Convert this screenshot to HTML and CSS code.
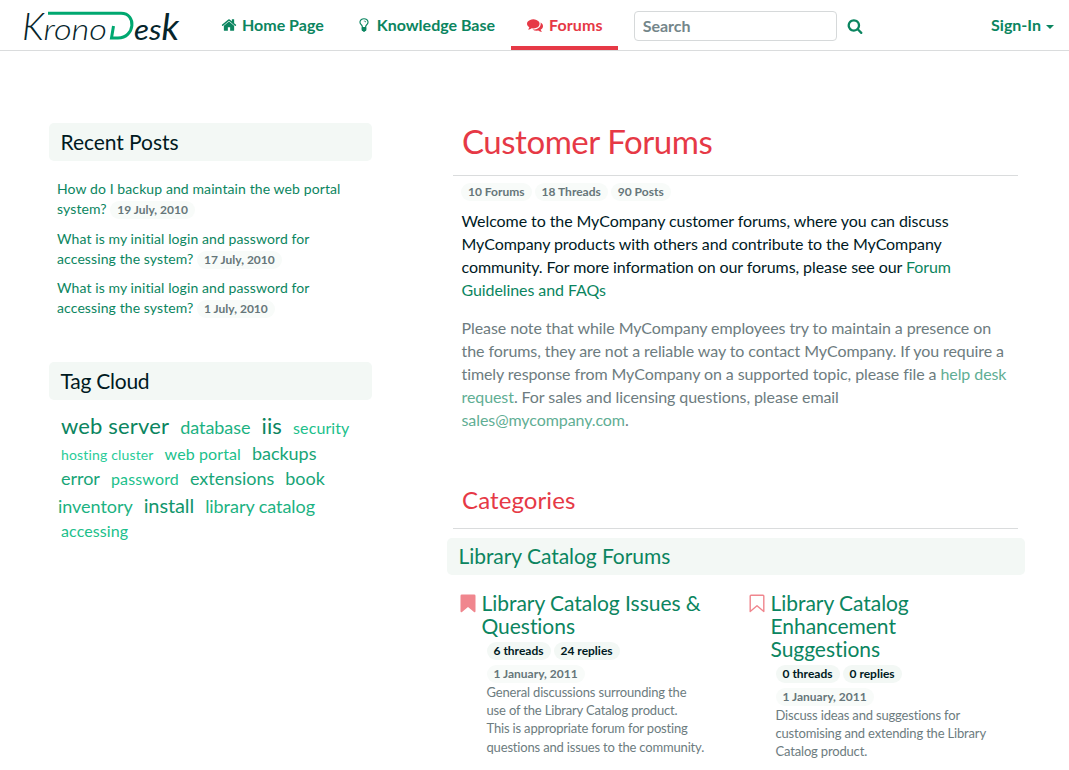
FILE: index.html
```html
<!DOCTYPE html>
<html lang="en">
<head>
<meta charset="utf-8">
<title>Customer Forums</title>
<link rel="stylesheet" href="styles.css">
</head>
<body>
<header class="navbar">
  <a class="brand">
    <svg width="170" height="44" viewBox="0 0 170 44">
      <text class="logo-light" y="37.500"><tspan class="cap" x="6">K</tspan><tspan class="low" x="27.500" textLength="63.500" lengthAdjust="spacingAndGlyphs">rono</tspan></text>
      <path d="M32 11.200H105C121 11.200 119 36 102 36H95.500L97.500 24" fill="none" stroke="#00a870" stroke-width="3"/>
      <text class="logo-dark" y="37.500"><tspan class="low" x="118" textLength="27.500" lengthAdjust="spacingAndGlyphs">es</tspan><tspan class="cap" x="145.500">k</tspan></text>
    </svg>
  </a>
  <nav class="links">
    <a class="link home"><svg class="fa" viewBox="0 0 1792 1792"><path d="M1472 992v480q0 26-19 45t-45 19h-384v-384h-256v384h-384q-26 0-45-19t-19-45v-480q0-1 .5-3t.5-3l575-474 575 474q1 2 1 6zm223-69l-62 74q-8 9-21 11h-3q-13 0-21-7l-692-577-692 577q-12 8-24 7-13-2-21-11l-62-74q-8-10-7-23.500t11-21.500l719-599q32-26 76-26t76 26l244 204v-195q0-14 9-23t23-9h192q14 0 23 9t9 23v408l219 182q10 8 11 21.500t-7 23.500z"/></svg><span>Home Page</span></a>
    <a class="link kb"><svg class="fa" viewBox="0 0 1792 1792"><path d="M1120 576q0 13-9.500 22.500t-22.500 9.500-22.500-9.500-9.500-22.500q0-46-54-71t-106-25q-13 0-22.500-9.500t-9.500-22.500 9.500-22.500 22.500-9.500q50 0 99.500 16t87 54 37.500 90zm160 0q0-72-34.500-134t-90-101.500-123-62-136.500-22.500-136.500 22.500-123 62-90 101.500-34.500 134q0 101 68 180 10 11 30.500 33t30.500 33q128 153 141 298h228q13-145 141-298 10-11 30.500-33t30.500-33q68-79 68-180zm128 0q0 155-103 268-45 49-74.500 87t-59.500 95.500-34 107.500q47 28 47 82 0 37-25 64 25 27 25 64 0 52-45 81 13 23 13 47 0 46-31.500 71t-77.500 25q-20 44-60 70t-87 26-87-26-60-70q-46 0-77.500-25t-31.500-71q0-24 13-47-45-29-45-81 0-37 25-64-25-27-25-64 0-54 47-82-4-50-34-107.500t-59.500-95.500-74.500-87q-103-113-103-268 0-99 44.500-184.500t117-142 164-89 186.500-32.500 186.500 32.500 164 89 117 142 44.500 184.500z"/></svg><span>Knowledge Base</span></a>
    <a class="link forums active"><svg class="fa" viewBox="0 0 1792 1792"><path d="M1408 768q0 139-94 257t-256.500 186.500-353.500 68.500q-86 0-176-16-124 88-278 128-36 9-86 16h-3q-11 0-20.500-8t-11.500-21q-1-3-1-6.500t.5-6.500 2-6l2.500-5 3.500-5.500 4-5 4.500-5 4-4.500q5-6 23-25t26-29.500 22.500-29 25-38.500 20.500-44q-124-72-195-177t-71-224q0-139 94-257t256.500-186.500 353.500-68.500 353.500 68.500 256.500 186.500 94 257zm384 256q0 120-71 224.500t-195 176.500q10 24 20.500 44t25 38.500 22.500 29 26 29.500 23 25q1 1 4 4.500t4.500 5 4 5 3.500 5.500l2.500 5 2 6 .5 6.500-1 6.500q-3 14-13 22t-22 7q-50-7-86-16-154-40-278-128-90 16-176 16-271 0-472-132 58 4 88 4 161 0 309-45t264-129q125-92 192-212t67-254q0-77-23-152 129 71 204 178t75 230z"/></svg><span>Forums</span></a>
  </nav>
  <input class="search" type="text" placeholder="Search">
  <svg class="fa find" viewBox="0 0 1792 1792"><path d="M1216 832q0-185-131.500-316.500t-316.500-131.500-316.500 131.500-131.500 316.500 131.500 316.500 316.500 131.500 316.500-131.500 131.500-316.500zm512 832q0 52-38 90t-90 38q-54 0-90-38l-343-342q-179 124-399 124-143 0-273.500-55.500t-225-150-150-225-55.500-273.500 55.500-273.500 150-225 225-150 273.500-55.500 273.500 55.500 225 150 150 225 55.500 273.500q0 220-124 399l343 343q37 37 37 90z"/></svg>
  <a class="signin">Sign-In<i class="caret"></i></a>
</header>
<div class="page">
  <aside class="side">
    <h3 class="panel-title">Recent Posts</h3>
    <ul class="posts">
      <li><a>How do I backup and maintain the web portal<br>system?</a> <span class="badge muted">19 July, 2010</span></li>
      <li><a>What is my initial login and password for<br>accessing the system?</a> <span class="badge muted">17 July, 2010</span></li>
      <li><a>What is my initial login and password for<br>accessing the system?</a> <span class="badge muted">1 July, 2010</span></li>
    </ul>
    <h3 class="panel-title cloud">Tag Cloud</h3>
    <div class="tags">
      <div class="row r1"><a class="t6">web server</a><a class="t3">database</a><a class="t6">iis</a><a class="t2">security</a></div>
      <div class="row r2"><a class="t1">hosting cluster</a><a class="t2">web portal</a><a class="t4">backups</a></div>
      <div class="row r3"><a class="t4">error</a><a class="t2">password</a><a class="t4">extensions</a><a class="t4">book</a></div>
      <div class="row r4"><a class="t3">inventory</a><a class="t5">install</a><a class="t3">library catalog</a></div>
      <div class="row r5"><a class="t2">accessing</a></div>
    </div>
  </aside>
  <main class="main">
    <h1 class="title">Customer Forums</h1>
    <div class="stats"><span class="badge muted">10 Forums</span><span class="badge muted">18 Threads</span><span class="badge muted">90 Posts</span></div>
    <p class="text">Welcome to the MyCompany customer forums, where you can discuss MyCompany products with others and contribute to the MyCompany community. For more information on our forums, please see our <a>Forum Guidelines and FAQs</a></p>
    <p class="text note">Please note that while MyCompany employees try to maintain a presence on the forums, they are not a reliable way to contact MyCompany. If you require a timely response from MyCompany on a supported topic, please file a <a>help desk request</a>. For sales and licensing questions, please email<br><a>sales@mycompany.com</a>.</p>
    <h2 class="subtitle">Categories</h2>
    <h3 class="panel-title category">Library Catalog Forums</h3>
    <div class="forums-grid">
      <section class="forum">
        <svg class="mark" width="16" height="19" viewBox="0 0 16 19"><path d="M1.800 .5H14.200Q15.500 .5 15.500 1.800V17Q15.500 19 14 18L8 13 2 18Q.5 19 .5 17V1.800Q.5 .5 1.800 .5Z" fill="#f0868e"/></svg>
        <div class="forum-body">
          <h4>Library Catalog Issues &amp; Questions</h4>
          <div class="meta"><span class="badge">6 threads</span><span class="badge">24 replies</span></div>
          <div class="meta"><span class="badge muted">1 January, 2011</span></div>
          <p>General discussions surrounding the<br>use of the Library Catalog product.<br>This is appropriate forum for posting<br>questions and issues to the community.</p>
        </div>
      </section>
      <section class="forum">
        <svg class="mark" width="16" height="19" viewBox="0 0 16 19"><path d="M2 1.200H14Q14.800 1.200 14.800 2V17.500L8 11.800 1.200 17.500V2Q1.200 1.200 2 1.200Z" fill="none" stroke="#f0868e" stroke-width="1.400" stroke-linejoin="round"/></svg>
        <div class="forum-body">
          <h4>Library Catalog<br>Enhancement<br>Suggestions</h4>
          <div class="meta"><span class="badge">0 threads</span><span class="badge">0 replies</span></div>
          <div class="meta"><span class="badge muted">1 January, 2011</span></div>
          <p>Discuss ideas and suggestions for<br>customising and extending the Library<br>Catalog product.</p>
        </div>
      </section>
    </div>
  </main>
</div>
</body>
</html>
```
FILE: styles.css
```css
* { box-sizing: border-box; }
body { margin: 0; height: 770px; overflow: hidden; background: #fff; color: #001a1f; font: 16px/23px Lato, sans-serif; font-variant-ligatures: none; }
h1, h2, h3, h4, p, ul { margin: 0; padding: 0; font-weight: 400; }
ul { list-style: none; }
a { color: #0b8560; }
.navbar { display: flex; height: 51px; border-bottom: 1px solid #dadcdd; font-weight: 700; color: #0b8560; }
.brand { margin-left: 16px; width: 190px; height: 44px; padding-top: 2px; }
.brand svg { display: block; }
.logo-light { font: italic 300 36px Lato, sans-serif; fill: #06252b; }
.logo-dark { font: italic 400 36px Lato, sans-serif; fill: #06252b; }
.cap { font-size: 37px; }
.low { font-size: 29px; }
.links { display: flex; }
.link { display: flex; align-items: center; height: 50px; padding: 0 16px 1px; white-space: nowrap; }
.fa { width: 16px; height: 16px; fill: currentColor; flex: none; }
.link .fa { margin: 1px 5px 0 0; }
.home { padding-left: 15px; }
.kb { padding-right: 15.500px; }
.active { color: #e63946; border-bottom: 4px solid #e63946; padding: 3px 15px 0 16.500px; }
.active.link .fa { margin-right: 6px; }
.active span { letter-spacing: .100px; }
.search { margin: 11px 0 0 16px; width: 203px; height: 30px; border: 1px solid #d6d9da; border-radius: 4px; padding: 0 8px 1px; font: 700 16px Lato, sans-serif; background: #fff; }
.search::placeholder { color: #74868a; opacity: 1; }
.find { margin: 18px 0 0 10px; }
.signin { margin: 13px 15px 0 auto; display: flex; align-items: center; height: 23px; }
.caret { border: 4px solid transparent; border-top-color: currentColor; border-bottom: 0; margin: 4px 0 0 5px; }
.page { display: flex; padding: 72px 44px 0 49px; }
.side { width: 323px; margin-right: 75px; flex: none; }
.panel-title { height: 38px; border-radius: 5px; background: #f3f8f5; padding-left: 11.500px; font-size: 21px; line-height: 38px; letter-spacing: -.050px; }
.posts { padding: 18px 0 0 8px; height: 201px; font-size: 14px; line-height: 20.400px; white-space: nowrap; }
.posts li { height: 49.500px; }
.posts li > a { letter-spacing: .100px; }
.badge { display: inline-block; height: 18px; padding: 0 7px; border-radius: 9px; background: #f3f8f5; font-size: 12px; line-height: 18px; font-weight: 700; white-space: nowrap; }
.muted { color: #667679; background: #f8fbf9; }
.tags { padding: 13px 0 0 12px; white-space: nowrap; }
.row { display: flex; gap: 11px; align-items: baseline; height: 26px; line-height: 26px; }
.r1 { height: 27px; }
.r2 { height: 25px; }
.r4 { margin-left: -3px; }
.r3 .t2 { letter-spacing: .160px; }
.r3 { height: 26.500px; }
.t1 { font-size: 14px; color: #29cc98; letter-spacing: .160px; }
.t2 { font-size: 16px; color: #20bf8b; letter-spacing: .100px; }
.t3 { font-size: 18px; color: #1cb282; letter-spacing: -.050px; }
.t4 { font-size: 18px; color: #18a577; letter-spacing: -.020px; }
.t5 { font-size: 20px; color: #12966c; letter-spacing: -.100px; }
.t6 { font-size: 22px; color: #0b8560; letter-spacing: .170px; }
.cloud { letter-spacing: -.250px; }
.main { flex: 1; }
.title, .subtitle { margin: 0 7px 0 6px; padding-left: 9px; color: #e63946; border-bottom: 1px solid #dadcdd; }
.title { height: 53px; font-size: 33px; letter-spacing: -.450px; line-height: 37px; }
.stats { display: flex; gap: 3px; padding: 7px 0 0 14px; height: 34px; }
.text { margin-top: -1px; padding-left: 14.500px; width: 566px; letter-spacing: -.080px; }
.note { margin-top: 15px; color: #6d7c80; }
.note a { color: #5fae94; }
.subtitle { margin-top: 54px; height: 44px; font-size: 24px; line-height: 29px; letter-spacing: .100px; }
.category { margin-top: 9px; height: 37px; line-height: 36px; color: #0b8560; }
.forums-grid { display: grid; grid-template-columns: 289px 1fr; padding: 16px 0 0 13px; }
.forum { display: flex; }
.mark { margin: 3px 5.500px 0 0; flex: none; }
.forum-body { width: 232px; }
.forum h4 { font-size: 21px; line-height: 23px; color: #0b8560; margin-bottom: 5px; letter-spacing: -.040px; }
.meta { display: flex; gap: 3px; height: 23px; padding-left: 5px; }
.forum p { padding-left: 5px; font-size: 13px; line-height: 18.400px; color: #6d7c80; margin-top: -5.500px; white-space: nowrap; letter-spacing: -.170px; }
```
